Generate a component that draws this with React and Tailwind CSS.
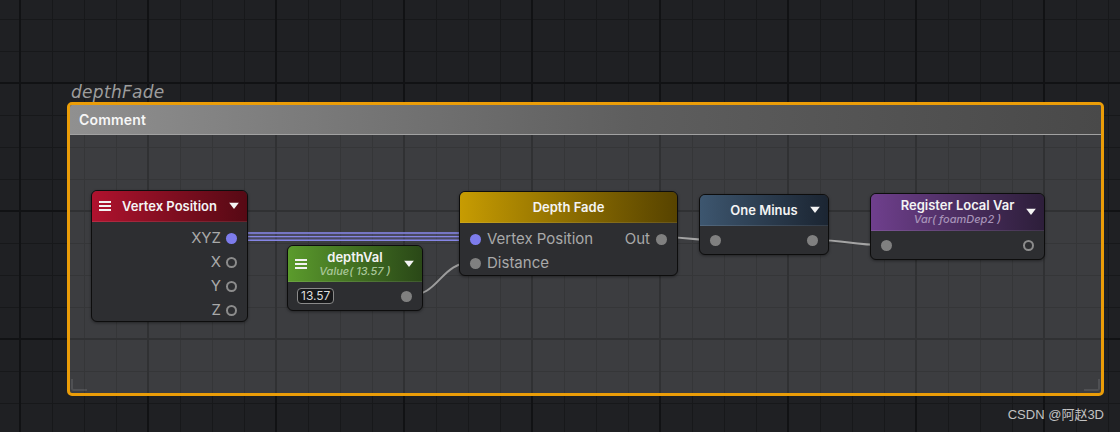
import React from "react";

const FONT = "font-['Inter','Noto_Sans',sans-serif]";

function Menu() {
  return (
    <svg width="12" height="10" viewBox="0 0 12 10" className="block">
      <rect x="0" y="0" width="12" height="2" fill="#f2f2f2" />
      <rect x="0" y="4" width="12" height="2" fill="#f2f2f2" />
      <rect x="0" y="8" width="12" height="2" fill="#f2f2f2" />
    </svg>
  );
}

function Arrow() {
  return (
    <svg width="10" height="7" viewBox="0 0 10 7" className="block">
      <polygon points="0,0 10,0 5,6.5" fill="#f4f4f4" />
    </svg>
  );
}

function Port({ kind = "gray" }) {
  if (kind === "blue")
    return <span className="block w-[11px] h-[11px] rounded-full bg-[#7d7cec] shrink-0" />;
  if (kind === "ring")
    return <span className="block w-[11px] h-[11px] rounded-full border-2 border-[#8c8c8c] shrink-0" />;
  return <span className="block w-[11px] h-[11px] rounded-full bg-[#808080] shrink-0" />;
}

function Node({ box, header, headerH, title, subtitle, subColor, menu, arrow, children }) {
  return (
    <div className={`absolute ${box} rounded-[6px] border border-[#0d0d0d] bg-[#2d2e31] overflow-hidden shadow-[0_1px_3px_rgba(0,0,0,0.4)] ${FONT}`}>
      <div className={`relative ${headerH} ${header} flex flex-col items-center justify-center border-b border-white/10`}>
        <div className="text-[13px] leading-[15px] font-semibold text-[#f4f4f4] whitespace-nowrap">{title}</div>
        {subtitle && (
          <div className={`text-[11px] leading-[13px] italic font-medium ${subColor} whitespace-nowrap`}>{subtitle}</div>
        )}
        {menu && (
          <div className="absolute left-[7px] top-1/2 -translate-y-1/2">
            <Menu />
          </div>
        )}
        {arrow && (
          <div className="absolute right-[8px] top-1/2 -translate-y-1/2">
            <Arrow />
          </div>
        )}
      </div>
      {children}
    </div>
  );
}

function Grid() {
  return (
    <svg className="absolute inset-0" width="1120" height="432">
      <defs>
        <pattern id="minor" patternUnits="userSpaceOnUse" x="20" y="19" width="32" height="32">
          <rect x="0" y="0" width="32" height="1" fill="#17181a" />
          <rect x="0" y="0" width="1" height="32" fill="#17181a" />
        </pattern>
        <pattern id="major" patternUnits="userSpaceOnUse" x="19" y="82" width="128" height="128">
          <rect x="0" y="0" width="128" height="2" fill="#111214" />
          <rect x="0" y="0" width="2" height="128" fill="#111214" />
        </pattern>
      </defs>
      <rect width="1120" height="432" fill="#1f2023" />
      <rect width="1120" height="432" fill="url(#minor)" />
      <rect width="1120" height="432" fill="url(#major)" />
    </svg>
  );
}

function Wires() {
  return (
    <svg className="absolute inset-0 pointer-events-none" width="1120" height="432">
      <rect x="236" y="232" width="236" height="9" fill="#7070c0" opacity="0.25" />
      <line x1="236" y1="233" x2="472" y2="233" stroke="#8686e6" strokeWidth="1.4" />
      <line x1="236" y1="236.6" x2="472" y2="236.6" stroke="#8686e6" strokeWidth="1.4" />
      <line x1="236" y1="240.2" x2="472" y2="240.2" stroke="#8686e6" strokeWidth="1.4" />
      <path d="M406 296 C442 296 438 262 475 262" stroke="#9c9c9c" strokeWidth="2" fill="none" />
      <path d="M661 237 C690 237 686 240 715 240" stroke="#a4a4a4" strokeWidth="2" fill="none" />
      <path d="M812 240 C852 240 846 245 886 245" stroke="#a4a4a4" strokeWidth="2" fill="none" />
    </svg>
  );
}

export default function App() {
  return (
    <div className="relative w-[1120px] h-[432px] overflow-hidden bg-[#1f2023]">
      <Grid />

      <div className="absolute left-[71px] top-[81px] text-[17px] leading-[22px] italic text-[#9d9d9d] tracking-[0.3px] font-['DejaVu_Sans',sans-serif]">
        depthFade
      </div>

      <div className="absolute left-[67px] top-[102px] w-[1037px] h-[294px] rounded-[5px] border-[3px] border-[#eb9d08] bg-white/[0.13] overflow-hidden">
        <div className={`h-[30px] flex items-center pl-[9px] bg-linear-to-r from-[#909090] via-[#5e5e5e] via-55% to-[#494949] border-b border-[#a2a2a2] ${FONT}`}>
          <span className="text-[14px] tracking-[0.2px] font-semibold text-[#f6f6f6]">Comment</span>
        </div>
        <div className="absolute left-[1px] bottom-[2px] w-[16px] h-[12px] border-l-2 border-b-2 border-white/10 rounded-bl-[3px]" />
        <div className="absolute right-[1px] bottom-[2px] w-[16px] h-[12px] border-r-2 border-b-2 border-white/10 rounded-br-[3px]" />
      </div>

      <Wires />

      {/* Vertex Position */}
      <Node
        box="left-[91px] top-[190px] w-[157px] h-[132px]"
        header="bg-linear-to-r from-[#b0122e] to-[#560914]"
        headerH="h-[31px]"
        title="Vertex Position"
        menu
        arrow
      >
        <div className="flex flex-col pt-[4px] pr-[10px] text-[15px] text-[#a9a9a9]">
          {[
            ["XYZ", "blue"],
            ["X", "ring"],
            ["Y", "ring"],
            ["Z", "ring"],
          ].map(([l, k]) => (
            <div key={l} className="h-6 flex items-center justify-end gap-[5px]">
              <span>{l}</span>
              <Port kind={k} />
            </div>
          ))}
        </div>
      </Node>

      {/* depthVal */}
      <Node
        box="left-[287px] top-[245px] w-[136px] h-[66px]"
        header="bg-linear-to-r from-[#5b9b2c] to-[#2a4817]"
        headerH="h-[36px]"
        title="depthVal"
        subtitle="Value( 13.57 )"
        subColor="text-[#a9c79a]"
        menu
        arrow
      >
        <div className="h-[28px] flex items-center justify-between pl-[9px] pr-[10px]">
          <span className="h-[16px] px-[3px] flex items-center rounded-[4px] border border-[#8a8a8a] bg-[#17181a] text-[12px] text-[#dcdcdc] leading-none">
            13.57
          </span>
          <Port />
        </div>
      </Node>

      {/* Depth Fade */}
      <Node
        box="left-[459px] top-[191px] w-[219px] h-[85px]"
        header="bg-linear-to-r from-[#c79c02] to-[#574300]"
        headerH="h-[31px]"
        title="Depth Fade"
      >
        <div className="flex flex-col pt-[4px] px-[10px] text-[15px] text-[#a9a9a9]">
          <div className="h-6 flex items-center gap-[6px]">
            <Port kind="blue" />
            <span>Vertex Position</span>
            <span className="ml-auto">Out</span>
            <Port />
          </div>
          <div className="h-6 flex items-center gap-[6px]">
            <Port />
            <span>Distance</span>
          </div>
        </div>
      </Node>

      {/* One Minus */}
      <Node
        box="left-[699px] top-[194px] w-[130px] h-[61px]"
        header="bg-linear-to-r from-[#3d566f] to-[#1b2532]"
        headerH="h-[31px]"
        title="One Minus"
        arrow
      >
        <div className="h-[28px] flex items-center justify-between px-[10px]">
          <Port />
          <Port />
        </div>
      </Node>

      {/* Register Local Var */}
      <Node
        box="left-[870px] top-[193px] w-[175px] h-[67px]"
        header="bg-linear-to-r from-[#6f3f8d] to-[#2d1e3a]"
        headerH="h-[37px]"
        title="Register Local Var"
        subtitle="Var( foamDep2 )"
        subColor="text-[#a793b8]"
        arrow
      >
        <div className="h-[28px] flex items-center justify-between px-[10px]">
          <Port />
          <Port kind="ring" />
        </div>
      </Node>

      <div className="absolute right-[16px] top-[406px] text-[13px] leading-[18px] text-[#c2c2c2] font-['Liberation_Sans','Noto_Sans_CJK_SC',sans-serif]">
        CSDN @阿赵3D
      </div>
    </div>
  );
}
